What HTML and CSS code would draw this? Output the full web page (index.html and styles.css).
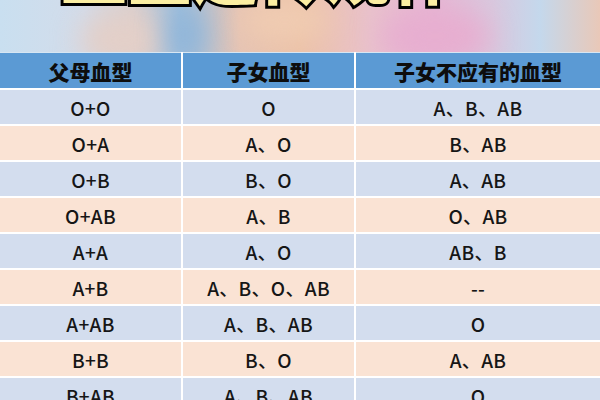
FILE: index.html
```html
<!DOCTYPE html>
<html lang="zh-CN">
<head>
<meta charset="utf-8">
<title>父母血型与子女血型</title>
<link rel="stylesheet" href="styles.css">
</head>
<body>
<div class="page">
  <div class="banner">
    <div class="blob b1"></div>
    <div class="blob b2"></div>
    <div class="blob b3"></div>
    <div class="blob b4"></div>
    <h1 class="title">血型遗传规律</h1>
  </div>
  <table class="blood">
    <thead>
      <tr><th class="c1">父母血型</th><th class="c2">子女血型</th><th class="c3">子女不应有的血型</th></tr>
    </thead>
    <tbody>
      <tr class="blue"><td>O+O</td><td>O</td><td>A、B、AB</td></tr>
      <tr class="peach"><td>O+A</td><td>A、O</td><td>B、AB</td></tr>
      <tr class="blue"><td>O+B</td><td>B、O</td><td>A、AB</td></tr>
      <tr class="peach"><td>O+AB</td><td>A、B</td><td>O、AB</td></tr>
      <tr class="blue"><td>A+A</td><td>A、O</td><td>AB、B</td></tr>
      <tr class="peach"><td>A+B</td><td>A、B、O、AB</td><td>--</td></tr>
      <tr class="blue"><td>A+AB</td><td>A、B、AB</td><td>O</td></tr>
      <tr class="peach"><td>B+B</td><td>B、O</td><td>A、AB</td></tr>
      <tr class="blue"><td>B+AB</td><td>A、B、AB</td><td>O</td></tr>
    </tbody>
  </table>
</div>
</body>
</html>
```

FILE: styles.css
```css
html, body {
  margin: 0;
  padding: 0;
  background: #ffffff;
}
.page {
  width: 600px;
  height: 400px;
  overflow: hidden;
  font-family: "Noto Sans CJK SC", "Noto Sans", sans-serif;
}
.banner {
  position: relative;
  height: 52px;
  overflow: hidden;
  background: linear-gradient(90deg, #c9dff0 0%, #d3dcea 14%, #d8cfcf 22%, #9fc0de 30%, #e6c4b4 40%, #ecc2a8 50%, #e9c2cc 62%, #e6b8d4 72%, #d9c8de 82%, #c4d8ec 90%, #e9c8b8 100%);
}
.blob {
  position: absolute;
  border-radius: 50%;
  filter: blur(14px);
}
.b1 { left: 80px; top: 10px; width: 90px; height: 60px; background: #e3cfc8; }
.b2 { left: 165px; top: 5px; width: 40px; height: 60px; background: #8fb5d9; }
.b3 { left: 380px; top: 6px; width: 110px; height: 60px; background: #e7aed0; }
.b4 { left: 240px; top: 0; width: 90px; height: 40px; background: #f0ccb2; }
.title {
  position: relative;
  margin: -61px 0 0 62px;
  font-family: "Noto Sans CJK SC", sans-serif;
  font-weight: 900;
  font-size: 64px;
  line-height: 64px;
  letter-spacing: 2px;
  color: #fbeea2;
  -webkit-text-stroke: 6px #000;
  paint-order: stroke fill;
  white-space: nowrap;
}
.blood {
  width: 600px;
  border-collapse: collapse;
  table-layout: fixed;
}
.blood th, .blood td {
  text-align: center;
  padding: 0;
  border: 2px solid #ffffff;
  border-top: none;
  color: #161616;
}
.blood tr > :first-child { border-left: none; }
.blood tr > :last-child { border-right: none; }
.blood th {
  background: #5b9ad4;
  height: 35px;
  font-size: 21px;
  font-weight: 900;
  color: #0d0d0d;
  border-top: 1px solid #d7e6f3;
}
.c1 { width: 181px; }
.c2 { width: 171px; }
.blood td {
  height: 34px;
  font-size: 19px;
  font-weight: 500;
  letter-spacing: 0.3px;
}
.blue td { background: #d3ddee; }
.peach td { background: #fae3d4; }
```
